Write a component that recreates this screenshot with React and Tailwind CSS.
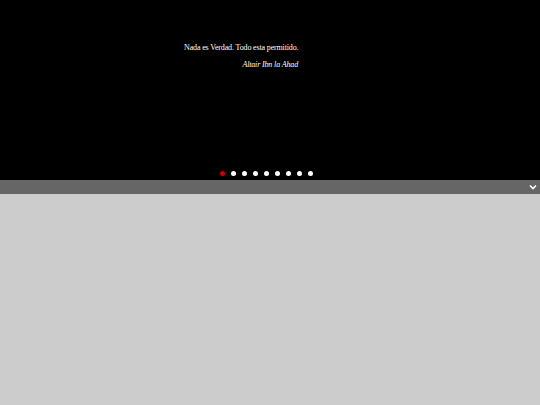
export default function App() {
  const dots = [0, 1, 2, 3, 4, 5, 6, 7, 8];
  return (
    <div className="w-[540px] h-[405px] bg-[#cccccc] flex flex-col" style={{ fontFamily: '"Liberation Serif", serif' }}>
      <div className="h-[180px] bg-black flex flex-col">
        <div className="pt-[43px] pl-[184px] w-[298px] text-white text-[8px] leading-[10px] tracking-[-0.15px]">
          <p className="whitespace-nowrap">Nada es Verdad. Todo esta permitido.</p>
          <p className="mt-[7px] italic text-right whitespace-nowrap">Altair Ibn la Ahad</p>
        </div>
        <div className="mt-auto mb-[4px] flex justify-center">
          <div className="flex gap-[6px] ml-[-8px]">
            {dots.map((d) => (
              <span
                key={d}
                className={
                  d === 0
                    ? "w-[5px] h-[5px] rounded-full bg-[#cc0000]"
                    : "w-[5px] h-[5px] rounded-full bg-white"
                }
              />
            ))}
          </div>
        </div>
      </div>
      <div className="h-[14px] bg-[#666666] flex items-center justify-end pr-[3px]">
        <svg width="8" height="6" viewBox="0 0 8 6">
          <path d="M1 1.5 L4 4.5 L7 1.5" stroke="white" strokeWidth="1.6" fill="none" />
        </svg>
      </div>
    </div>
  );
}
